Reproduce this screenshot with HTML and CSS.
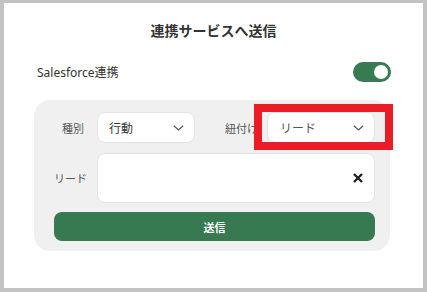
FILE: index.html
```html
<!DOCTYPE html>
<html lang="ja">
<head>
<meta charset="utf-8">
<link rel="stylesheet" href="styles.css">
</head>
<body>
<div class="window">
  <h1 class="title">連携サービスへ送信</h1>
  <div class="sf-row">
    <span class="sf-label">Salesforce連携</span>
    <span class="toggle"><span class="knob"></span></span>
  </div>
  <div class="panel">
    <div class="row row-selects">
      <span class="label label-1">種別</span>
      <div class="select select-1">
        <span class="select-text">行動</span>
        <svg class="chev" width="11" height="6" viewBox="0 0 11 6"><polyline points="0.8,0.8 5.5,5 10.2,0.8" fill="none" stroke="#555" stroke-width="1.2"/></svg>
      </div>
      <span class="label label-2">紐付け</span>
      <div class="select select-2">
        <span class="select-text muted">リード</span>
        <svg class="chev" width="11" height="6" viewBox="0 0 11 6"><polyline points="0.8,0.8 5.5,5 10.2,0.8" fill="none" stroke="#555" stroke-width="1.2"/></svg>
      </div>
    </div>
    <div class="row row-input">
      <span class="label label-1">リード</span>
      <div class="input">
        <svg class="clear" width="10" height="10" viewBox="0 0 10 10"><path d="M1 1 L9 9 M9 1 L1 9" stroke="#1e1e1e" stroke-width="2.3" stroke-linecap="butt"/></svg>
      </div>
    </div>
    <button class="send">送信</button>
  </div>
  <div class="highlight"></div>
</div>
</body>
</html>
```
FILE: styles.css
```css
html, body {
  margin: 0;
  padding: 0;
}
body {
  background: #c3c3c3;
  width: 427px;
  height: 292px;
  overflow: hidden;
  font-family: "Noto Sans", "Noto Sans CJK JP", sans-serif;
}
.window {
  position: relative;
  margin: 3px 0 0 4px;
  width: 419px;
  height: 285px;
  background: #ffffff;
  box-sizing: border-box;
  padding-top: 18px;
}
.title {
  margin: 0;
  font-size: 14px;
  line-height: 20px;
  font-weight: 700;
  color: #333333;
  text-align: center;
}
.sf-row {
  margin-top: 21px;
  padding: 0 32px 0 33px;
  height: 20px;
  display: flex;
  align-items: center;
  justify-content: space-between;
}
.sf-label {
  font-size: 12px;
  color: #333333;
}
.toggle {
  width: 38px;
  height: 20px;
  border-radius: 10px;
  background: #387b51;
  display: flex;
  align-items: center;
  justify-content: flex-end;
  padding-right: 3px;
  box-sizing: border-box;
}
.knob {
  width: 14px;
  height: 14px;
  border-radius: 50%;
  background: #ffffff;
}
.panel {
  margin: 18px 0 0 30px;
  width: 356px;
  height: 151px;
  box-sizing: border-box;
  background: #f0f0f0;
  border-radius: 16px;
  padding: 12px 15px 10px 20px;
  display: flex;
  flex-direction: column;
}
.row {
  display: flex;
  align-items: center;
}
.label {
  font-size: 11px;
  color: #555555;
}
.label-1 {
  width: 30px;
  text-align: right;
  margin-right: 13px;
  white-space: nowrap;
}
.label-2 {
  margin-left: 30px;
  margin-right: 9px;
  white-space: nowrap;
}
.select {
  height: 31px;
  box-sizing: border-box;
  background: #ffffff;
  border: 1px solid #e4e4e4;
  border-radius: 8px;
  display: flex;
  align-items: center;
  justify-content: space-between;
}
.select-1 {
  width: 98px;
  padding: 0 10px 0 11px;
}
.select-2 {
  width: 108px;
  padding: 0 10px 0 12px;
}
.select-text {
  font-size: 12px;
  color: #333333;
}
.select-text.muted {
  color: #555555;
}
.row-input {
  margin-top: 10px;
}
.input {
  width: 278px;
  height: 50px;
  box-sizing: border-box;
  background: #ffffff;
  border: 1px solid #e4e4e4;
  border-radius: 8px;
  display: flex;
  align-items: center;
  justify-content: flex-end;
  padding-right: 11px;
}
.send {
  margin-top: 9px;
  width: 321px;
  height: 29px;
  border: none;
  border-radius: 8px;
  background: #377a51;
  color: #ffffff;
  font-family: "Noto Sans CJK JP", "Noto Sans", sans-serif;
  font-size: 11px;
  font-weight: 700;
  padding: 0;
}
.highlight {
  position: absolute;
  left: 250px;
  top: 101px;
  width: 139px;
  height: 46px;
  box-sizing: border-box;
  border: 8px solid #ec1c24;
}
```
